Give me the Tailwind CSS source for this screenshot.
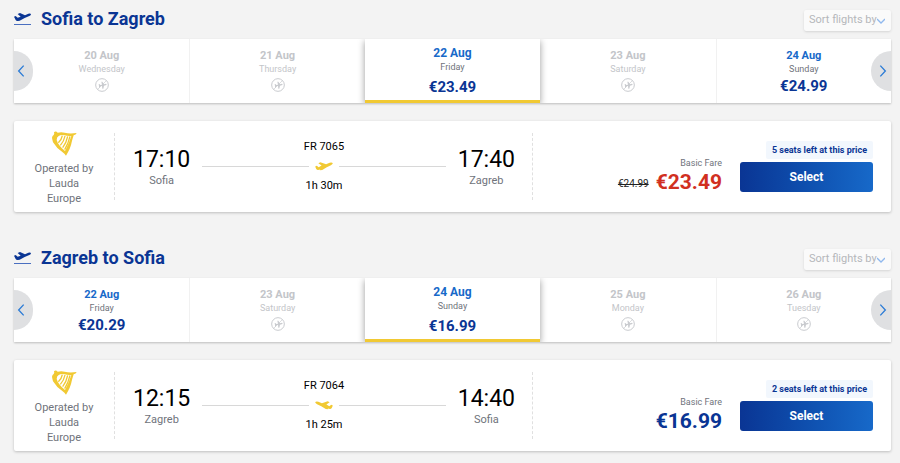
<!DOCTYPE html>
<html lang="en">
<head>
    <meta charset="UTF-8">
    <meta name="viewport" content="width=device-width, initial-scale=1.0">
    <title>Select flights</title>
    <script src="https://cdn.jsdelivr.net/npm/@tailwindcss/browser@4"></script>
</head>
<body class="bg-[#f3f3f3] font-[Roboto,sans-serif] text-black pl-[14px] pr-[9px]">
    <!-- shared icons -->
    <svg class="hidden">
        <symbol id="takeoff" viewBox="0 0 51 42">
            <path fill="#0a3594" d="M0 14 5 12 11 17 20 14 11 6 18 3 33 10 43 5Q50 3 51 7 51 10 46 12L32 18 17 26 12 27Q7 28 5 24Z"/>
            <path fill="#4a6fc0" d="M0 36h51v3H0z"/>
        </symbol>
        <symbol id="plane" viewBox="0 0 55 28">
            <path fill="#f1c933" d="M0 14 5 12 11 16 20 11 10 4 16 1 34 7 45 2Q53 0 55 4 54 8 49 10L36 16 22 25 14 26 16 23 9 25Q5 25 3 21Z"/>
        </symbol>
        <symbol id="harp" viewBox="0 0 75 75">
            <path fill="#f1c933" fill-rule="evenodd" d="M6 4Q9 0 14 2L17 5Q28 2 38 5 52 9 74 6 72 11 65 13 62 22 59 34 56 52 42 74 38 68 31 63 13 51 3 34 1 26 0 20 1 14 5 12 8 9 6 4ZM20 15Q14 18 14 27 18 43 39 60 50 40 58 15 47 16 37 13 27 11 20 15Z"/>
            <path fill="none" stroke="#f1c933" stroke-width="4" d="M31 14Q29 26 19 35M39 15Q36 31 25 43M47 16Q43 36 32 50M54 16Q49 38 38 56"/>
        </symbol>
        <symbol id="noflight" viewBox="0 0 42 42">
            <circle cx="21" cy="21" r="19" fill="none" stroke="#c9cbcf" stroke-width="3"/>
            <path fill="none" stroke="#c9cbcf" stroke-width="2" d="M7 35 35 7"/>
            <path fill="#c9cbcf" d="M11 18h2l3 3 5-1-2-9h3l5 8 6-2q3 1 1 4l-7 2-2 9h-3l-1-8-5 1-2 4h-2v-5z"/>
        </symbol>
        <symbol id="chevron" viewBox="0 0 20 36">
            <path fill="none" stroke="#2b7bd6" stroke-width="4" d="M18 2 3 18 18 34"/>
        </symbol>
    </svg>

    <main>
        <section class="mb-[27px]">
            <header class="flex items-center justify-between h-[39px]">
                <h2 class="flex items-center gap-[10px] mb-[2px] text-[18px] leading-6 font-bold text-[#0a3594]">
                    <svg class="w-[17px] h-[14px]"><use href="#takeoff"/></svg>Sofia to Zagreb
                </h2>
                <label class="relative block mt-[2px]">
                    <select aria-label="Sort flights by" class="block appearance-none h-[21px] pl-[5px] pr-[14px] rounded-xs bg-[#fafafa] shadow-sm text-[11px] text-[#b5b7bb]">
                        <option>Sort flights by</option>
                    </select>
                    <svg class="absolute right-[6px] top-2 w-2 h-[6px]" viewBox="0 0 8 6"><path fill="none" stroke="#8fb8ee" stroke-width="1.3" d="M0 1l4 4 4-4"/></svg>
                </label>
            </header>
            <div class="relative bg-white shadow-[0_1px_2px_rgba(0,0,0,0.22)]">
                <ul class="grid grid-cols-5 h-16 text-center overflow-hidden">
                    <li class="pt-[10px] text-[#c3c5c9]">
                        <p class="text-[11px] leading-[13px] font-bold">20 Aug</p>
                        <p class="text-[9px] leading-[14px]">Wednesday</p>
                        <svg class="w-[14px] h-[14px] mx-auto mt-[2px]"><use href="#noflight"/></svg>
                    </li>
                    <li class="pt-[10px] border-l border-[#f1f1f1] text-[#c3c5c9]">
                        <p class="text-[11px] leading-[13px] font-bold">21 Aug</p>
                        <p class="text-[9px] leading-[14px]">Thursday</p>
                        <svg class="w-[14px] h-[14px] mx-auto mt-[2px]"><use href="#noflight"/></svg>
                    </li>
                    <li class="relative pt-[7px] border-b-3 border-[#f1c933] bg-white shadow-[0_2px_7px_rgba(0,0,0,0.4)]">
                        <p class="text-[12px] leading-[14px] font-bold text-[#1769c9]">22 Aug</p>
                        <p class="text-[9px] leading-[14px] text-[#6f737b]">Friday</p>
                        <p class="text-[15px] leading-[18px] font-bold text-[#0a3594] mt-1">€23.49</p>
                    </li>
                    <li class="pt-[10px] text-[#c3c5c9]">
                        <p class="text-[11px] leading-[13px] font-bold">23 Aug</p>
                        <p class="text-[9px] leading-[14px]">Saturday</p>
                        <svg class="w-[14px] h-[14px] mx-auto mt-[2px]"><use href="#noflight"/></svg>
                    </li>
                    <li class="pt-[10px] border-l border-[#f1f1f1]">
                        <p class="text-[11px] leading-[13px] font-bold text-[#1769c9]">24 Aug</p>
                        <p class="text-[9px] leading-[14px] text-[#6f737b]">Sunday</p>
                        <p class="text-[15px] leading-5 font-bold text-[#0a3594]">€24.99</p>
                    </li>
                </ul>
                <button aria-label="Previous dates" class="absolute left-0 top-3 w-[19px] h-10 rounded-r-full bg-[#dfe0e2] pl-[3px]"><svg class="w-2 h-3"><use href="#chevron"/></svg></button>
                <button aria-label="Next dates" class="absolute right-0 top-3 w-5 h-10 rounded-l-full bg-[#dfe0e2] pl-2"><svg class="w-2 h-3 -scale-x-100"><use href="#chevron"/></svg></button>
            </div>

            <article class="flex items-center h-[91px] mt-[18px] rounded-xs bg-white shadow-[0_1px_3px_rgba(0,0,0,0.22)]">
                <div class="w-[101px] h-[67px] border-r border-dashed border-[#e0e0e0] flex flex-col items-center">
                    <svg class="w-[25px] h-[25px] -mt-[2px] shrink-0"><use href="#harp"/></svg>
                    <p class="w-16 mt-[5px] text-[11px] leading-[15px] text-center text-[#6f737b]">Operated by Lauda Europe</p>
                </div>
                <div class="flex-1 h-[67px] border-r border-dashed border-[#e0e0e0] flex items-center gap-3 pl-[18px] pr-[17px] text-center">
                    <div>
                        <p class="text-[23px] leading-7">17:10</p>
                        <p class="text-[11px] leading-[14px] text-[#6f737b]">Sofia</p>
                    </div>
                    <div class="flex-1 text-[11px] leading-[14px]">
                        <p>FR 7065</p>
                        <div class="flex items-center gap-[6px] h-[25px]">
                            <span class="flex-1 h-px bg-[#d8d8d8]"></span>
                            <svg class="w-[18px] h-[9px]"><use href="#plane"/></svg>
                            <span class="flex-1 h-px bg-[#d8d8d8]"></span>
                        </div>
                        <p>1h 30m</p>
                    </div>
                    <div>
                        <p class="text-[23px] leading-7">17:40</p>
                        <p class="text-[11px] leading-[14px] text-[#6f737b]">Zagreb</p>
                    </div>
                </div>
                <div class="w-[358px] pr-[18px] flex items-end justify-end gap-[18px]">
                    <div class="text-right">
                        <p class="text-[9px] leading-[18px] text-[#6f737b]">Basic Fare</p>
                        <p class="flex items-center justify-end gap-[7px] text-[21px] leading-5 font-bold text-[#d1301f]"><s class="pt-1 text-[10px] leading-4 font-normal text-[#222]">€24.99</s>€23.49</p>
                    </div>
                    <div class="flex flex-col items-end gap-[3px]">
                        <p class="px-[6px] rounded-xs bg-[#f2f7fd] text-[9px] leading-[18px] font-bold text-[#0a3594]">5 seats left at this price</p>
                        <button class="w-[133px] h-[30px] rounded-[3px] bg-linear-to-r from-[#0a3594] to-[#1769c9] text-[12px] font-bold text-white">Select</button>
                    </div>
                </div>
            </article>
        </section>

        <section>
            <header class="flex items-center justify-between h-[39px]">
                <h2 class="flex items-center gap-[10px] mb-[2px] text-[18px] leading-6 font-bold text-[#0a3594]">
                    <svg class="w-[17px] h-[14px]"><use href="#takeoff"/></svg>Zagreb to Sofia
                </h2>
                <label class="relative block mt-[2px]">
                    <select aria-label="Sort flights by" class="block appearance-none h-[21px] pl-[5px] pr-[14px] rounded-xs bg-[#fafafa] shadow-sm text-[11px] text-[#b5b7bb]">
                        <option>Sort flights by</option>
                    </select>
                    <svg class="absolute right-[6px] top-2 w-2 h-[6px]" viewBox="0 0 8 6"><path fill="none" stroke="#8fb8ee" stroke-width="1.3" d="M0 1l4 4 4-4"/></svg>
                </label>
            </header>
            <div class="relative bg-white shadow-[0_1px_2px_rgba(0,0,0,0.22)]">
                <ul class="grid grid-cols-5 h-16 text-center overflow-hidden">
                    <li class="pt-[10px]">
                        <p class="text-[11px] leading-[13px] font-bold text-[#1769c9]">22 Aug</p>
                        <p class="text-[9px] leading-[14px] text-[#6f737b]">Friday</p>
                        <p class="text-[15px] leading-5 font-bold text-[#0a3594]">€20.29</p>
                    </li>
                    <li class="pt-[10px] border-l border-[#f1f1f1] text-[#c3c5c9]">
                        <p class="text-[11px] leading-[13px] font-bold">23 Aug</p>
                        <p class="text-[9px] leading-[14px]">Saturday</p>
                        <svg class="w-[14px] h-[14px] mx-auto mt-[2px]"><use href="#noflight"/></svg>
                    </li>
                    <li class="relative pt-[7px] border-b-3 border-[#f1c933] bg-white shadow-[0_2px_7px_rgba(0,0,0,0.4)]">
                        <p class="text-[12px] leading-[14px] font-bold text-[#1769c9]">24 Aug</p>
                        <p class="text-[9px] leading-[14px] text-[#6f737b]">Sunday</p>
                        <p class="text-[15px] leading-[18px] font-bold text-[#0a3594] mt-1">€16.99</p>
                    </li>
                    <li class="pt-[10px] text-[#c3c5c9]">
                        <p class="text-[11px] leading-[13px] font-bold">25 Aug</p>
                        <p class="text-[9px] leading-[14px]">Monday</p>
                        <svg class="w-[14px] h-[14px] mx-auto mt-[2px]"><use href="#noflight"/></svg>
                    </li>
                    <li class="pt-[10px] border-l border-[#f1f1f1] text-[#c3c5c9]">
                        <p class="text-[11px] leading-[13px] font-bold">26 Aug</p>
                        <p class="text-[9px] leading-[14px]">Tuesday</p>
                        <svg class="w-[14px] h-[14px] mx-auto mt-[2px]"><use href="#noflight"/></svg>
                    </li>
                </ul>
                <button aria-label="Previous dates" class="absolute left-0 top-3 w-[19px] h-10 rounded-r-full bg-[#dfe0e2] pl-[3px]"><svg class="w-2 h-3"><use href="#chevron"/></svg></button>
                <button aria-label="Next dates" class="absolute right-0 top-3 w-5 h-10 rounded-l-full bg-[#dfe0e2] pl-2"><svg class="w-2 h-3 -scale-x-100"><use href="#chevron"/></svg></button>
            </div>

            <article class="flex items-center h-[91px] mt-[18px] mb-3 rounded-xs bg-white shadow-[0_1px_3px_rgba(0,0,0,0.22)]">
                <div class="w-[101px] h-[67px] border-r border-dashed border-[#e0e0e0] flex flex-col items-center">
                    <svg class="w-[25px] h-[25px] -mt-[2px] shrink-0"><use href="#harp"/></svg>
                    <p class="w-16 mt-[5px] text-[11px] leading-[15px] text-center text-[#6f737b]">Operated by Lauda Europe</p>
                </div>
                <div class="flex-1 h-[67px] border-r border-dashed border-[#e0e0e0] flex items-center gap-3 pl-[18px] pr-[17px] text-center">
                    <div>
                        <p class="text-[23px] leading-7">12:15</p>
                        <p class="text-[11px] leading-[14px] text-[#6f737b]">Zagreb</p>
                    </div>
                    <div class="flex-1 text-[11px] leading-[14px]">
                        <p>FR 7064</p>
                        <div class="flex items-center gap-[6px] h-[25px]">
                            <span class="flex-1 h-px bg-[#d8d8d8]"></span>
                            <svg class="w-[18px] h-[9px] -scale-x-100"><use href="#plane"/></svg>
                            <span class="flex-1 h-px bg-[#d8d8d8]"></span>
                        </div>
                        <p>1h 25m</p>
                    </div>
                    <div>
                        <p class="text-[23px] leading-7">14:40</p>
                        <p class="text-[11px] leading-[14px] text-[#6f737b]">Sofia</p>
                    </div>
                </div>
                <div class="w-[358px] pr-[18px] flex items-end justify-end gap-[18px]">
                    <div class="text-right">
                        <p class="text-[9px] leading-[18px] text-[#6f737b]">Basic Fare</p>
                        <p class="text-[21px] leading-5 font-bold text-[#0a3594]">€16.99</p>
                    </div>
                    <div class="flex flex-col items-end gap-[3px]">
                        <p class="px-[6px] rounded-xs bg-[#f2f7fd] text-[9px] leading-[18px] font-bold text-[#0a3594]">2 seats left at this price</p>
                        <button class="w-[133px] h-[30px] rounded-[3px] bg-linear-to-r from-[#0a3594] to-[#1769c9] text-[12px] font-bold text-white">Select</button>
                    </div>
                </div>
            </article>
        </section>
    </main>
</body>
</html>
